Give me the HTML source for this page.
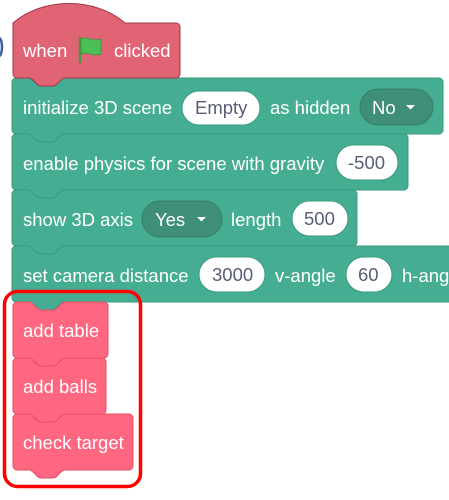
<!DOCTYPE html>
<html><head><style>
html,body{margin:0;padding:0;background:#fff;width:449px;height:500px;overflow:hidden}
svg{display:block}
text{font-family:"Liberation Sans",sans-serif;font-size:18.5px;fill:#fff}
.dk{fill:#575e75}
</style></head><body>
<svg width="449" height="500" viewBox="0 0 449 500">
<path d="M-1,38 a3,9 0 0 1 0,18" fill="none" stroke="#3d5fa3" stroke-width="2.5"/>

<g transform="translate(12,246)">
<path d="M0,4 A4,4 0 0 1 4,0 H16 c2,0 3,1 4,2 l4,4 c1,1 2,2 4,2 h12 c2,0 3,-1 4,-2 l4,-4 c1,-1 2,-2 4,-2 H460 V52 a4,4 0 0 1 -4,4 H52 c-2,0 -3,1 -4,2 l-4,4 c-1,1 -2,2 -4,2 h-12 c-2,0 -3,-1 -4,-2 l-4,-4 c-1,-1 -2,-2 -4,-2 H4 a4,4 0 0 1 -4,-4 z" fill="#45ae92" stroke="#3a9a80"/>
</g>
<g transform="translate(12,190)">
<path d="M0,4 A4,4 0 0 1 4,0 H16 c2,0 3,1 4,2 l4,4 c1,1 2,2 4,2 h12 c2,0 3,-1 4,-2 l4,-4 c1,-1 2,-2 4,-2 H341 a4,4 0 0 1 4,4 V52 a4,4 0 0 1 -4,4 H52 c-2,0 -3,1 -4,2 l-4,4 c-1,1 -2,2 -4,2 h-12 c-2,0 -3,-1 -4,-2 l-4,-4 c-1,-1 -2,-2 -4,-2 H4 a4,4 0 0 1 -4,-4 z" fill="#45ae92" stroke="#3a9a80"/>
</g>
<g transform="translate(12,134)">
<path d="M0,4 A4,4 0 0 1 4,0 H16 c2,0 3,1 4,2 l4,4 c1,1 2,2 4,2 h12 c2,0 3,-1 4,-2 l4,-4 c1,-1 2,-2 4,-2 H392 a4,4 0 0 1 4,4 V52 a4,4 0 0 1 -4,4 H52 c-2,0 -3,1 -4,2 l-4,4 c-1,1 -2,2 -4,2 h-12 c-2,0 -3,-1 -4,-2 l-4,-4 c-1,-1 -2,-2 -4,-2 H4 a4,4 0 0 1 -4,-4 z" fill="#45ae92" stroke="#3a9a80"/>
</g>
<g transform="translate(12,78)">
<path d="M0,4 A4,4 0 0 1 4,0 H16 c2,0 3,1 4,2 l4,4 c1,1 2,2 4,2 h12 c2,0 3,-1 4,-2 l4,-4 c1,-1 2,-2 4,-2 H427 a4,4 0 0 1 4,4 V52 a4,4 0 0 1 -4,4 H52 c-2,0 -3,1 -4,2 l-4,4 c-1,1 -2,2 -4,2 h-12 c-2,0 -3,-1 -4,-2 l-4,-4 c-1,-1 -2,-2 -4,-2 H4 a4,4 0 0 1 -4,-4 z" fill="#45ae92" stroke="#3a9a80"/>
</g>
<g transform="translate(13,23)">
<path d="M0,0 c30,-26 82,-26 112,0 H163 a4,4 0 0 1 4,4 V51 a4,4 0 0 1 -4,4 H52 c-2,0 -3,1 -4,2 l-4,4 c-1,1 -2,2 -4,2 h-12 c-2,0 -3,-1 -4,-2 l-4,-4 c-1,-1 -2,-2 -4,-2 H4 a4,4 0 0 1 -4,-4 z" fill="#e06474" stroke="#a23848"/>
</g>
<text x="23" y="57">when</text>
<path d="M80,62 V38" stroke="#45993d" stroke-width="2.5" stroke-linecap="round"/>
<path d="M81,39 c6,-3 11,3 20,0 l0,15 c-9,3 -14,-3 -20,0 z" fill="#4cbf56" stroke="#45993d" stroke-width="1"/>
<text x="114" y="57">clicked</text>

<text x="23" y="114">initialize 3D scene</text>
<rect x="182" y="91" width="78" height="34" rx="17" fill="#fff" stroke="#3a9a80"/>
<text x="195" y="114" class="dk">Empty</text>
<text x="270" y="114">as hidden</text>
<rect x="360" y="89" width="73" height="36" rx="18" fill="#3f8f78" stroke="#367f6a"/>
<text x="372" y="114">No</text>
<path d="M406,105 h9 l-4.5,4.5 z" fill="#fff"/>

<text x="23" y="170">enable physics for scene with gravity</text>
<rect x="336" y="145" width="62" height="35" rx="17.5" fill="#fff" stroke="#3a9a80"/>
<text x="348" y="169" class="dk">-500</text>

<text x="23" y="226">show 3D axis</text>
<rect x="142" y="201" width="80" height="36" rx="18" fill="#3f8f78" stroke="#367f6a"/>
<text x="155" y="226">Yes</text>
<path d="M197,217 h9 l-4.5,4.5 z" fill="#fff"/>
<text x="231" y="226">length</text>
<rect x="292" y="201" width="56" height="35" rx="17.5" fill="#fff" stroke="#3a9a80"/>
<text x="304" y="225" class="dk">500</text>

<text x="23" y="282">set camera distance</text>
<rect x="199" y="257" width="66" height="35" rx="17.5" fill="#fff" stroke="#3a9a80"/>
<text x="212" y="281" class="dk">3000</text>
<text x="275" y="282">v-angle</text>
<rect x="346" y="257" width="46" height="35" rx="17.5" fill="#fff" stroke="#3a9a80"/>
<text x="358" y="281" class="dk">60</text>
<text x="402" y="282">h-ang</text>

<g transform="translate(13,414)">
<path d="M0,4 A4,4 0 0 1 4,0 H16 c2,0 3,1 4,2 l4,4 c1,1 2,2 4,2 h12 c2,0 3,-1 4,-2 l4,-4 c1,-1 2,-2 4,-2 H116 a4,4 0 0 1 4,4 V52 a4,4 0 0 1 -4,4 H52 c-2,0 -3,1 -4,2 l-4,4 c-1,1 -2,2 -4,2 h-12 c-2,0 -3,-1 -4,-2 l-4,-4 c-1,-1 -2,-2 -4,-2 H4 a4,4 0 0 1 -4,-4 z" fill="#ff6680" stroke="#e64d66"/>
</g>
<g transform="translate(13,358)">
<path d="M0,4 A4,4 0 0 1 4,0 H16 c2,0 3,1 4,2 l4,4 c1,1 2,2 4,2 h12 c2,0 3,-1 4,-2 l4,-4 c1,-1 2,-2 4,-2 H89 a4,4 0 0 1 4,4 V52 a4,4 0 0 1 -4,4 H52 c-2,0 -3,1 -4,2 l-4,4 c-1,1 -2,2 -4,2 h-12 c-2,0 -3,-1 -4,-2 l-4,-4 c-1,-1 -2,-2 -4,-2 H4 a4,4 0 0 1 -4,-4 z" fill="#ff6680" stroke="#e64d66"/>
</g>
<g transform="translate(13,302)">
<path d="M0,4 A4,4 0 0 1 4,0 H16 c2,0 3,1 4,2 l4,4 c1,1 2,2 4,2 h12 c2,0 3,-1 4,-2 l4,-4 c1,-1 2,-2 4,-2 H91 a4,4 0 0 1 4,4 V52 a4,4 0 0 1 -4,4 H52 c-2,0 -3,1 -4,2 l-4,4 c-1,1 -2,2 -4,2 h-12 c-2,0 -3,-1 -4,-2 l-4,-4 c-1,-1 -2,-2 -4,-2 H4 a4,4 0 0 1 -4,-4 z" fill="#ff6680" stroke="#e64d66"/>
</g>
<text x="23" y="337">add table</text>
<text x="23" y="393">add balls</text>
<text x="23" y="449">check target</text>

<rect x="4.5" y="291.5" width="136" height="195" rx="13" fill="none" stroke="#f00" stroke-width="3.5"/>
</svg>
</body></html>
